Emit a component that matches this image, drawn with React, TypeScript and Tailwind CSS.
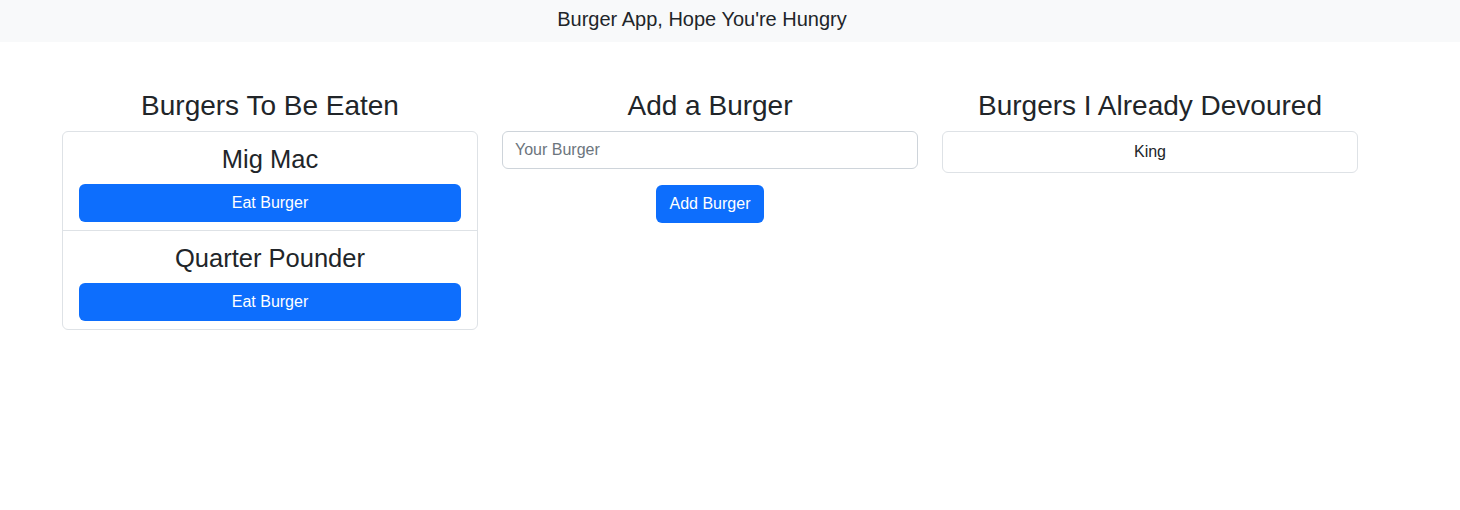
import React from "react";

const font = { fontFamily: '"Liberation Sans", Arial, sans-serif' };

function EatItem({ name, last }: { name: string; last?: boolean }) {
  return (
    <li className={`px-4 pt-[10px] pb-2 ${last ? "" : "border-b border-[#dee2e6]"}`}>
      <h4 className="text-center text-[25.5px] leading-[34px] mb-2 text-[#212529]">{name}</h4>
      <button className="w-full h-[38px] rounded-[6px] bg-[#0d6efd] text-white text-[16px] leading-6">
        Eat Burger
      </button>
    </li>
  );
}

export default function App() {
  return (
    <div className="min-h-[510px] bg-white text-[#212529]" style={font}>
      <header className="h-[42px] bg-[#f8f9fa]">
        <div className="w-[1320px] ml-[50px] h-full flex items-center justify-center pr-4 pb-1">
          <span className="text-[20px] leading-[30px] text-[#212529]">Burger App, Hope You're Hungry</span>
        </div>
      </header>
      <main className="w-[1320px] ml-[50px] pt-[47px] flex">
        <section className="w-[440px] px-3">
          <h3 className="text-center text-[28px] leading-[34px] mb-2">Burgers To Be Eaten</h3>
          <ul className="border border-[#dee2e6] rounded-[6px]">
            <EatItem name="Mig Mac" />
            <EatItem name="Quarter Pounder" last />
          </ul>
        </section>
        <section className="w-[440px] px-3">
          <h3 className="text-center text-[28px] leading-[34px] mb-2">Add a Burger</h3>
          <input
            type="text"
            placeholder="Your Burger"
            className="block w-full h-[38px] px-3 border border-[#ced4da] rounded-[6px] text-[16px] placeholder:text-[#6c757d] outline-none"
          />
          <div className="flex justify-center mt-4">
            <button className="h-[38px] px-[14px] rounded-[6px] bg-[#0d6efd] text-white text-[16px] leading-6">
              Add Burger
            </button>
          </div>
        </section>
        <section className="w-[440px] px-3">
          <h3 className="text-center text-[28px] leading-[34px] mb-2">Burgers I Already Devoured</h3>
          <ul className="border border-[#dee2e6] rounded-[6px]">
            <li className="px-4 py-2 text-center text-[16px] leading-6">King</li>
          </ul>
        </section>
      </main>
    </div>
  );
}
